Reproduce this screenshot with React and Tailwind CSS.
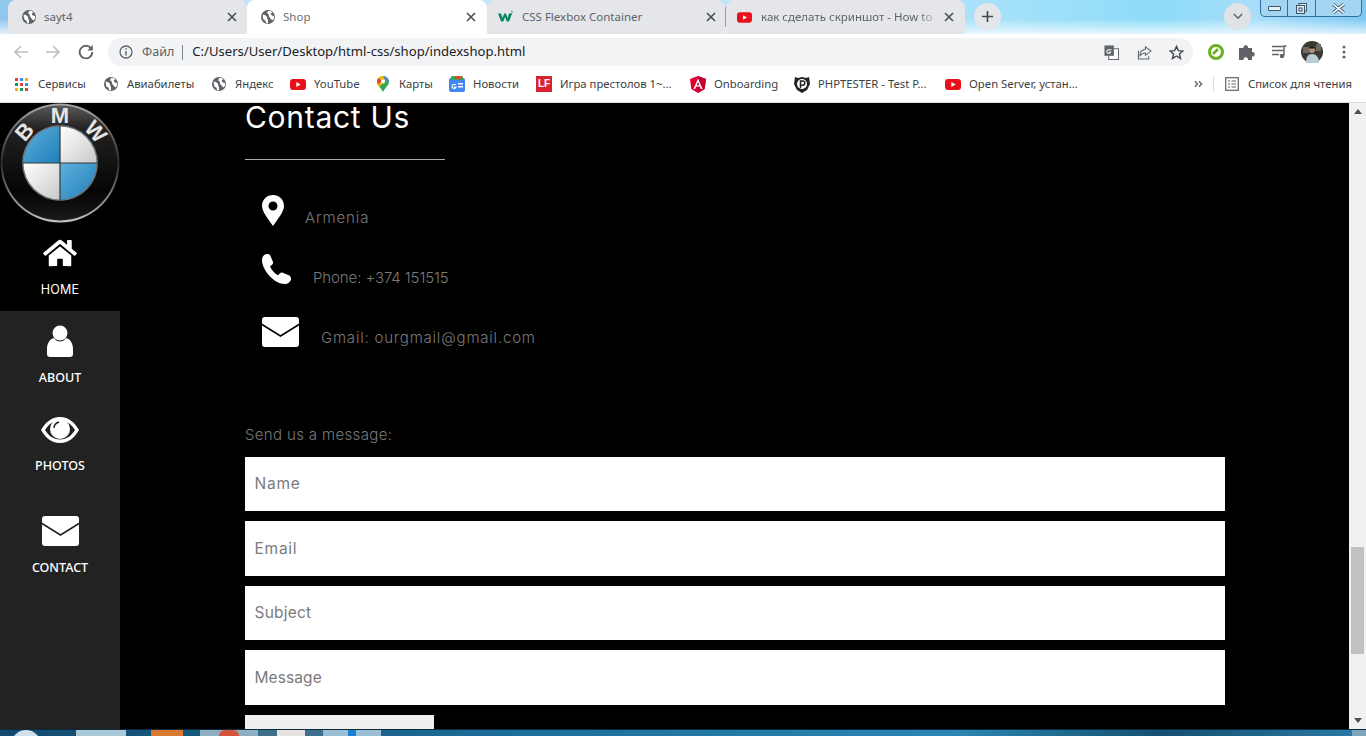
import React from "react";
import { FaHome } from "react-icons/fa";

const ui = "font-['Noto_Sans','Open_Sans',sans-serif]";
const mont = "font-['Inter','Open_Sans',sans-serif]";

const Globe = ({ className = "w-[14px] h-[14px]" }) => (
  <svg viewBox="0 0 16 16" className={className}>
    <circle cx="8" cy="8" r="8" fill="#5f6368" />
    <path d="M2 5l3 1 2 2 0 2 1 1 0 4-2 0-1-3-2-1-1-3zM8 1l3 0 2 2-2 1 1 2 3 1 0 3-2 2-2-2-2-3 0-2-2-1z" fill="#fff" />
  </svg>
);
const YT = ({ className = "w-[16px] h-[11px]" }) => (
  <svg viewBox="0 0 16 11" className={className}>
    <rect width="16" height="11" rx="3" fill="#e8101a" />
    <path d="M6.3 3l4.4 2.5-4.4 2.5z" fill="#fff" />
  </svg>
);
const W3 = () => (
  <svg viewBox="0 0 17 14" className="w-[17px] h-[14px]">
    <path d="M0 3h3.500l1.500 5 2-5h2l2 5 1.500-5H16l-3.500 9h-2.500L8 7l-2 5H3.500z" fill="#04895f" />
    <path d="M14.500 0.500h2l-1 1a.8.8 0 1 1-1 1" fill="none" stroke="#04895f" strokeWidth="0.600" />
  </svg>
);
const Close = () => (
  <svg viewBox="0 0 10 10" className="w-[10px] h-[10px]">
    <path d="M1 1l8 8M9 1l-8 8" stroke="#4a4d50" strokeWidth="1.600" />
  </svg>
);
const Grid = () => {
  const c = ["#db4437", "#4285f4", "#f4b400", "#0f9d58", "#db4437", "#4285f4", "#f4b400", "#0f9d58", "#db4437"];
  return (
    <div className="grid grid-cols-3 gap-[2px] w-[13px] h-[13px]">
      {c.map((col, i) => (
        <span key={i} style={{ background: col }} />
      ))}
    </div>
  );
};
const MapsPin = () => (
  <svg viewBox="0 0 12 16" className="w-[12px] h-[16px]">
    <path d="M6 0a6 6 0 0 1 6 6c0 3-4 6-6 10C4 12 0 9 0 6a6 6 0 0 1 6-6z" fill="#34a853" />
    <path d="M6 0a6 6 0 0 1 5 2.500L2 11C1 9.500 0 8 0 6a6 6 0 0 1 6-6z" fill="#fbbc04" />
    <path d="M1.500 2L5 5 2 8C1 7.500 0 7 0 6c0-1.500.5-3 1.500-4z" fill="#ea4335" />
    <path d="M6 0a6 6 0 0 1 6 6L8 4z" fill="#4285f4" />
    <circle cx="6" cy="5.500" r="2" fill="#fff" />
  </svg>
);
const News = () => (
  <svg viewBox="0 0 16 16" className="w-[16px] h-[16px]">
    <rect y="2" width="16" height="14" rx="2" fill="#4285f4" />
    <rect x="2" width="12" height="4" rx="1" fill="#34a853" />
    <rect x="6" width="6" height="3" fill="#ea4335" />
    <rect x="9" y="7" width="5" height="1.500" fill="#fff" />
    <rect x="9" y="10" width="5" height="1.500" fill="#fff" />
    <path d="M7 8.500H4.500a2 2 0 1 0 2.500 2.500H5" fill="none" stroke="#fff" strokeWidth="1.200" />
  </svg>
);
const LF = () => (
  <div className="w-[16px] h-[16px] bg-[#d8232f] flex items-center justify-center text-white text-[10px] font-bold leading-none font-['Liberation_Sans',sans-serif]">
    LF
  </div>
);
const Angular = () => (
  <svg viewBox="0 0 16 17" className="w-[16px] h-[17px]">
    <path d="M8 0l8 3-1.300 10L8 17l-6.700-4L0 3z" fill="#dd0031" />
    <path d="M8 0l8 3-1.300 10L8 17z" fill="#c3002f" />
    <path d="M8 2.500L3.500 13h1.700l.9-2.400h3.800l.9 2.400h1.700zM6.700 9.300L8 6l1.300 3.300z" fill="#fff" />
  </svg>
);
const PHP = () => (
  <svg viewBox="0 0 16 17" className="w-[16px] h-[17px]">
    <path d="M1 1l3 1 4-1 4 1 3-1 1 7-3 6-5 3-5-3-3-6z" fill="#222" />
    <circle cx="8" cy="8" r="5" fill="#fff" />
    <path d="M6.500 12V5h2.200a2 2 0 0 1 0 4.200H6.500" fill="none" stroke="#222" strokeWidth="1.500" />
  </svg>
);
const Tab = ({ w, active, icon, title, fade = "", closeMr, pl = "pl-[13px]", gap = "ml-[9px]" }) => (
  <div className={`${w} ${pl} h-full flex items-center shrink-0 rounded-t-[8px] ${active ? "bg-white" : "bg-[#e4e6e9]"}`}>
    <div className="w-[15px] flex justify-center shrink-0">{icon}</div>
    <span className={`${gap} flex-1 min-w-0 text-[11.500px] whitespace-nowrap overflow-hidden ${active ? "text-[#6c6f73]" : "text-[#5f6368]"} ${fade} ${ui}`}>
      {title}
    </span>
    <div className={`shrink-0 ml-1 flex ${closeMr}`}>
      <Close />
    </div>
  </div>
);

const bookmarks = [
  { w: "w-[89px]", ib: "w-[23px]", icon: <Grid />, t: "Сервисы" },
  { w: "w-[108px]", ib: "w-[23px]", icon: <Globe />, t: "Авиабилеты" },
  { w: "w-[78px]", ib: "w-[23px]", icon: <Globe />, t: "Яндекс" },
  { w: "w-[87px]", ib: "w-[24px]", icon: <YT />, t: "YouTube" },
  { w: "w-[72px]", ib: "w-[22px]", icon: <MapsPin />, t: "Карты" },
  { w: "w-[87px]", ib: "w-[24px]", icon: <News />, t: "Новости" },
  { w: "w-[154px]", ib: "w-[24px]", icon: <LF />, t: "Игра престолов 1~..." },
  { w: "w-[104px]", ib: "w-[24px]", icon: <Angular />, t: "Onboarding" },
  { w: "w-[151px]", ib: "w-[24px]", icon: <PHP />, t: "PHPTESTER - Test P..." },
  { w: "w-[150px]", ib: "w-[24px]", icon: <YT />, t: "Open Server, устан..." },
];

const Bmw = () => (
  <svg viewBox="0 0 120 120" className="w-[120px] h-[120px] block">
    <defs>
      <linearGradient id="ring" x1="0" y1="0" x2="0" y2="1">
        <stop offset="0" stopColor="#a5a5a5" />
        <stop offset="0.5" stopColor="#2a2a2a" />
        <stop offset="1" stopColor="#c4c4c4" />
      </linearGradient>
      <linearGradient id="body" x1="0" y1="0" x2="0" y2="1">
        <stop offset="0" stopColor="#5a5a5a" />
        <stop offset="0.2" stopColor="#222222" />
        <stop offset="0.75" stopColor="#050505" />
        <stop offset="1" stopColor="#1a1a1a" />
      </linearGradient>
      <linearGradient id="blue" x1="0" y1="0" x2="1" y2="1">
        <stop offset="0" stopColor="#5fb0dd" />
        <stop offset="1" stopColor="#1f7fb8" />
      </linearGradient>
      <linearGradient id="wh" x1="0" y1="0" x2="1" y2="1">
        <stop offset="0" stopColor="#ffffff" />
        <stop offset="1" stopColor="#c9c9c9" />
      </linearGradient>
      <path id="arc" d="M 20 60 A 40 40 0 0 1 100 60" />
    </defs>
    <circle cx="60" cy="60" r="59.500" fill="url(#ring)" />
    <circle cx="60" cy="60" r="57.500" fill="url(#body)" />
    <g fill="#e4e4e4" fontFamily="Liberation Sans, sans-serif" fontSize="22" fontWeight="700">
      <text><textPath href="#arc" startOffset="23%" textAnchor="middle">B</textPath></text>
      <text><textPath href="#arc" startOffset="50%" textAnchor="middle">M</textPath></text>
      <text><textPath href="#arc" startOffset="77%" textAnchor="middle">W</textPath></text>
    </g>
    <circle cx="60" cy="60" r="38" fill="#6d7378" />
    <path d="M60 60V23.500A36.500 36.500 0 0 0 23.500 60z" fill="url(#blue)" />
    <path d="M60 60V23.500A36.500 36.500 0 0 1 96.500 60z" fill="url(#wh)" />
    <path d="M60 60H23.500A36.500 36.500 0 0 0 60 96.500z" fill="url(#wh)" />
    <path d="M60 60H96.500A36.500 36.500 0 0 1 60 96.500z" fill="url(#blue)" />
    <path d="M60 22V98M22 60H98" stroke="#33393d" strokeWidth="1.200" />
  </svg>
);

const UserIcon = () => (
  <svg viewBox="0 0 26 32" className="w-[26px] h-[32px]">
    <circle cx="13" cy="8" r="7.500" fill="#fff" />
    <path d="M7 13c1.500 2.500 3.500 3.500 6 3.500s4.500-1 6-3.500c4 1 7 5 7 11v5a3 3 0 0 1-3 3H3a3 3 0 0 1-3-3v-5c0-6 3-10 7-11z" fill="#fff" />
  </svg>
);
const EyeIcon = () => (
  <svg viewBox="0 0 38 26" className="w-[38px] h-[26px]">
    <path fillRule="evenodd" d="M19 0C28 0 34 6 38 13c-4 7-10 13-19 13S4 20 0 13C4 6 10 0 19 0zM19 3.500C12 3.500 7 8 4 13c3 5 8 9.500 15 9.500S31 18 34 13C31 8 26 3.500 19 3.500z" fill="#fff" />
    <circle cx="19" cy="12" r="10" fill="#fff" />
    <path d="M13 11c0-3 2-5 5-6" fill="none" stroke="#222" strokeWidth="1.500" />
  </svg>
);
const MailIcon = () => (
  <svg viewBox="0 0 37 30" className="w-[37px] h-[30px]">
    <path d="M3 0h31a3 3 0 0 1 3 3v3.500L18.500 18 0 6.500V3a3 3 0 0 1 3-3z" fill="#fff" />
    <path d="M0 8.500l18.500 11.500L37 8.500V27a3 3 0 0 1-3 3H3a3 3 0 0 1-3-3z" fill="#fff" />
  </svg>
);
const PinIcon = () => (
  <svg viewBox="0 0 22 31" className="w-[22px] h-[31px]">
    <path fillRule="evenodd" d="M11 0c6 0 11 4.500 11 11 0 6-7 14-11 20C7 25 0 17 0 11 0 4.500 5 0 11 0zM11 6.500a4.500 4.500 0 1 0 0 9 4.500 4.500 0 0 0 0-9z" fill="#fff" />
  </svg>
);
const PhoneIcon = () => (
  <svg viewBox="0 0 29 30" className="w-[29px] h-[30px]">
    <path d="M5 0c2 0 3 .5 3.500 2L11 8c.3 1-.2 2-1 2.800L8 12.500c1.500 3.500 4.500 7 8 8.800l2-2c.8-.8 1.800-1 2.800-.6l6 2.600c1.500.6 2.200 2 2.200 3.400 0 2.500-2.500 5.300-6 5.300C12 30 0 16 0 6 0 3 2 0 5 0z" fill="#fff" />
  </svg>
);
const Avatar = () => (
  <svg viewBox="0 0 22 22" className="w-[22px] h-[22px] ml-[13px]">
    <circle cx="11" cy="11" r="11" fill="#3d3a34" />
    <path d="M2 6h6v6H2zM15 3h5v7h-5z" fill="#6f6a5f" />
    <path d="M5 22c0-6 2-9 6-9s7 3 7 9z" fill="#b9cdd6" />
    <circle cx="11" cy="9" r="3" fill="#b58f77" />
    <path d="M8 7.500c1-2.500 5-2.500 6 0z" fill="#1d1b18" />
  </svg>
);

const NavItem = ({ box, icon, label, h }) => (
  <div className={`${h} flex flex-col items-center`}>
    <div className={`${box} flex items-start justify-center`}>{icon}</div>
    <span className="text-[12.500px] leading-[16px] font-medium text-white">{label}</span>
  </div>
);

const Field = ({ ph, h, tr }) => (
  <input
    placeholder={ph}
    readOnly
    className={`${h} ${tr} w-full bg-white pl-[9.500px] pb-[1px] text-[15.500px] text-[#7b7b7b] placeholder:text-[#7b7b7b] outline-none block ${mont}`}
  />
);

export default function App() {
  return (
    <div className="w-[1366px] h-[736px] flex flex-col overflow-hidden bg-black">
      {/* tab strip */}
      <div className="h-[34px] flex shrink-0 bg-[linear-gradient(180deg,transparent_55%,rgba(255,255,255,0.75)_100%),linear-gradient(90deg,#8fc6ee_0%,#c4e4f8_18%,#bfe6fb_60%,#8ddcf8_85%,#a9defa_92%,#7cc8f2_100%)]">
        <div className="w-[8px] shrink-0" />
        <Tab w="w-[239px]" gap="ml-[8px]" icon={<Globe />} title="sayt4" closeMr="mr-[10px]" />
        <Tab w="w-[240px]" gap="ml-[8px]" active icon={<Globe />} title="Shop" closeMr="mr-[11px]" />
        <Tab w="w-[238px]" pl="pl-[11px]" icon={<W3 />} title="CSS Flexbox Container" closeMr="mr-[9px]" />
        <div className="w-[1px] bg-[#9aa0a6] shrink-0 my-[7px]" />
        <Tab
          w="w-[239px]"
          pl="pl-[11px]"
          icon={<YT />}
          title="как сделать скриншот - How to"
          closeMr="mr-[11px]"
          fade="[mask-image:linear-gradient(90deg,#000_88%,transparent_100%)]"
        />
        <div className="ml-[9px] mt-[3px] w-[27px] h-[27px] rounded-full bg-[#e4e6e9] flex items-center justify-center shrink-0">
          <svg viewBox="0 0 14 14" className="w-[13px] h-[13px]">
            <path d="M7 1v12M1 7h12" stroke="#45484c" strokeWidth="1.800" />
          </svg>
        </div>
        <div className="ml-[223px] mt-[3px] w-[27px] h-[27px] rounded-full bg-[#dfe3e6] flex items-center justify-center shrink-0">
          <svg viewBox="0 0 12 8" className="w-[10px] h-[7px]">
            <path d="M1 1l5 5 5-5" fill="none" stroke="#5f6368" strokeWidth="1.800" />
          </svg>
        </div>
        <div className="ml-[9px] w-[102px] h-[17px] border border-t-0 border-[#2f6f9d] rounded-b-[5px] bg-[#a4d5f2] flex items-center shrink-0">
          <div className="w-[27px] h-full flex items-center justify-center border-r border-[#2f6f9d]">
            <div className="w-[13px] h-[5px] border border-[#39566b] bg-[#e8f0f6] rounded-[1px]" />
          </div>
          <div className="w-[28px] h-full flex items-center justify-center border-r border-[#2f6f9d]">
            <svg viewBox="0 0 11 11" className="w-[11px] h-[11px]">
              <rect x="3" y="0.500" width="7.500" height="7.500" fill="#dfe9f0" stroke="#39566b" />
              <rect x="0.500" y="2.500" width="8" height="8" fill="#dfe9f0" stroke="#39566b" />
              <rect x="3" y="5" width="3" height="3" fill="none" stroke="#39566b" />
            </svg>
          </div>
          <div className="flex-1 flex items-center justify-center">
            <svg viewBox="0 0 14 10" className="w-[15px] h-[11px]">
              <path d="M2 1l10 8M12 1L2 9" stroke="#39566b" strokeWidth="3" />
              <path d="M2 1l10 8M12 1L2 9" stroke="#fff" strokeWidth="1.500" />
            </svg>
          </div>
        </div>
      </div>

      {/* toolbar */}
      <div className="h-[34px] pt-[2px] bg-white flex items-center shrink-0">
        <div className="w-[108px] flex items-center pl-[13px] shrink-0">
          <svg viewBox="0 0 16 16" className="w-[16px] h-[16px]">
            <path d="M15 8H2M8 2L2 8l6 6" fill="none" stroke="#bcbfc3" strokeWidth="1.700" />
          </svg>
          <svg viewBox="0 0 16 16" className="w-[16px] h-[16px] ml-[16px]">
            <path d="M1 8h13M8 2l6 6-6 6" fill="none" stroke="#bcbfc3" strokeWidth="1.700" />
          </svg>
          <svg viewBox="0 0 16 16" className="w-[16px] h-[16px] ml-[17px]">
            <path d="M13.500 5A6.300 6.300 0 1 0 14.300 8" fill="none" stroke="#5f6368" strokeWidth="1.800" />
            <path d="M14.800 1v5.500H9.300z" fill="#5f6368" />
          </svg>
        </div>
        <div className="w-[1085px] h-[28px] rounded-full bg-[#f1f3f4] flex items-center pl-[11px] shrink-0">
          <svg viewBox="0 0 14 14" className="w-[14px] h-[14px] shrink-0">
            <circle cx="7" cy="7" r="6" fill="none" stroke="#5f6368" strokeWidth="1.300" />
            <path d="M7 6v4.500M7 3.300v1.400" stroke="#5f6368" strokeWidth="1.400" />
          </svg>
          <span className={`ml-[9px] text-[12.500px] text-[#5f6368] ${ui}`}>Файл</span>
          <div className="w-[1px] h-[15px] bg-[#80868b] ml-[8px]" />
          <span className={`ml-[9px] text-[13.100px] text-[#202124] whitespace-nowrap ${ui}`}>
            C:/Users/User/Desktop/html-css/shop/indexshop.html
          </span>
          <div className="ml-auto flex items-center pr-[9px]">
            <svg viewBox="0 0 16 16" className="w-[15px] h-[15px]">
              <rect x="5" y="4" width="10.500" height="11.500" fill="#fff" stroke="#5f6368" />
              <rect x="0.500" y="0.500" width="10" height="11" fill="#5f6368" />
              <path d="M8 5H4.500a2 2 0 1 0 2.500 2.500H5.500" fill="none" stroke="#fff" strokeWidth="1.200" />
            </svg>
            <svg viewBox="0 0 16 16" className="w-[15px] h-[15px] ml-[18px]">
              <path d="M9 2l6 4.500L9 11V8.500C6 8.500 4 10 3 12c0-4 2-7 6-7.500z M1.500 6v9h11v-3" fill="none" stroke="#5f6368" strokeWidth="1.100" />
            </svg>
            <svg viewBox="0 0 16 16" className="w-[15px] h-[15px] ml-[17px]">
              <path d="M8 1.500l2 4.500 4.800.4-3.700 3.100 1.200 4.800L8 11.700l-4.300 2.600 1.200-4.800L1.200 6.400 6 6z" fill="none" stroke="#45484c" strokeWidth="1.500" />
            </svg>
          </div>
        </div>
        <div className="flex items-center pl-[15px]">
          <svg viewBox="0 0 16 16" className="w-[16px] h-[16px]">
            <circle cx="8" cy="8" r="6.500" fill="none" stroke="#6ab023" strokeWidth="3" />
            <path d="M5 10l5-5" stroke="#6ab023" strokeWidth="2.500" />
          </svg>
          <svg viewBox="0 0 16 16" className="w-[16px] h-[16px] ml-[15px]">
            <path d="M0 4h4.500a2.300 2.300 0 1 1 4.500 0H13v4a2.300 2.300 0 1 1 0 4.500V16H9a2.300 2.300 0 1 0-4.500 0H0z" fill="#5f6368" />
          </svg>
          <svg viewBox="0 0 16 14" className="w-[16px] h-[14px] ml-[17px]">
            <path d="M0 1.500h11M0 5.500h11M0 9.500h7" stroke="#5f6368" strokeWidth="1.300" />
            <path d="M14.500 1H12v9.500" fill="none" stroke="#5f6368" strokeWidth="1.500" />
            <circle cx="10" cy="11" r="2.300" fill="#5f6368" />
          </svg>
          <Avatar />
          <svg viewBox="0 0 4 14" className="w-[4px] h-[14px] ml-[19px]">
            <circle cx="2" cy="2" r="1.500" fill="#5f6368" />
            <circle cx="2" cy="7" r="1.500" fill="#5f6368" />
            <circle cx="2" cy="12" r="1.500" fill="#5f6368" />
          </svg>
        </div>
      </div>

      {/* bookmarks */}
      <div className="h-[35px] pb-[2px] bg-white border-b border-[#dadce0] flex items-center pl-[15px] shrink-0">
        {bookmarks.map((b) => (
          <div key={b.t} className={`${b.w} flex items-center shrink-0`}>
            <div className={`${b.ib} shrink-0 flex`}>{b.icon}</div>
            <span className={`text-[11.300px] text-[#3c4043] whitespace-nowrap ${ui}`}>{b.t}</span>
          </div>
        ))}
        <svg viewBox="0 0 10 8" className="w-[9px] h-[8px] ml-[99px] shrink-0">
          <path d="M1 1l3 3-3 3M5.500 1l3 3-3 3" fill="none" stroke="#5f6368" strokeWidth="1.500" />
        </svg>
        <div className="w-[1px] h-[16px] bg-[#dadce0] ml-[10px] shrink-0" />
        <svg viewBox="0 0 14 14" className="w-[14px] h-[14px] ml-[11px] shrink-0">
          <rect x="0.700" y="0.700" width="12.600" height="12.600" fill="none" stroke="#5f6368" strokeWidth="1.200" />
          <path d="M3 4h2M3 7h2M3 10h2M6.500 4H11M6.500 7H11M6.500 10H11" stroke="#5f6368" strokeWidth="1.200" />
        </svg>
        <span className={`ml-[9px] text-[11.300px] text-[#3c4043] whitespace-nowrap ${ui}`}>Список для чтения</span>
      </div>

      {/* page */}
      <div className="flex-1 min-h-0 flex bg-black">
        <aside className="w-[120px] shrink-0 flex flex-col">
          <Bmw />
          <div className="h-[88px] bg-black flex flex-col items-center">
            <div className="h-[51px] pt-[15px] flex justify-center">
              <FaHome className="text-white w-[34px] h-[30px]" />
            </div>
            <span className={`mt-[8px] text-[12.500px] leading-[16px] tracking-[0.15px] text-white ${mont}`}>HOME</span>
          </div>
          <div className={`flex-1 bg-[#222222] flex flex-col ${ui}`}>
            <NavItem h="h-[88px]" box="h-[59px] pt-[14px]" icon={<UserIcon />} label="ABOUT" />
            <NavItem h="h-[102px]" box="h-[59px] pt-[18px]" icon={<EyeIcon />} label="PHOTOS" />
            <NavItem h="h-[90px]" box="h-[59px] pt-[15px]" icon={<MailIcon />} label="CONTACT" />
          </div>
        </aside>

        <main className={`flex-1 min-w-0 pl-[125px] ${mont}`}>
          <div className="w-[980px]">
            <h1 className="text-[30px] leading-[28px] h-[28px] text-white font-normal tracking-[0.7px]">Contact Us</h1>
            <div className="mt-[28px] w-[200px] h-[1px] bg-[#a9a9a9]" />
            <div className="mt-[28px] flex flex-col">
              <div className="h-[60px] flex pl-[17px] gap-[21px]">
                <div className="mt-[7px]"><PinIcon /></div>
                <span className="mt-[20px] text-[15px] leading-[20px] font-light text-[#7a7a7a] tracking-[0.9px]">Armenia</span>
              </div>
              <div className="h-[60px] flex pl-[17px] gap-[22px]">
                <div className="mt-[6px]"><PhoneIcon /></div>
                <span className="mt-[20px] text-[15px] leading-[20px] font-light text-[#7a7a7a] tracking-[-0.1px]">Phone: +374 151515</span>
              </div>
              <div className="h-[60px] flex pl-[17px] gap-[22px]">
                <div className="mt-[9px]"><MailIcon /></div>
                <span className="mt-[20px] text-[15px] leading-[20px] font-light text-[#7a7a7a] tracking-[0.8px]">Gmail: ourgmail@gmail.com</span>
              </div>
            </div>
            <p className="mt-[57px] text-[15px] leading-[20px] font-light text-[#7a7a7a] tracking-[0.35px]">Send us a message:</p>
            <div className="mt-[12px] flex flex-col gap-[10px]">
              <Field ph="Name" h="h-[54px]" tr="tracking-[0.8px]" />
              <Field ph="Email" h="h-[55px]" tr="tracking-[0.75px]" />
              <Field ph="Subject" h="h-[54px]" tr="tracking-[0.2px]" />
              <Field ph="Message" h="h-[55px]" tr="tracking-[0.1px]" />
              <div className="w-[189px] h-[40px] bg-[#efefef]" />
            </div>
          </div>
        </main>

        <div className="w-[17px] shrink-0 bg-[#f1f1f1] flex flex-col items-center">
          <svg viewBox="0 0 8 5" className="w-[8px] h-[5px] mt-[6px]">
            <path d="M0 5l4-5 4 5z" fill="#505050" />
          </svg>
          <div className="w-[13px] h-[107px] bg-[#c1c1c1] mt-[433px]" />
          <svg viewBox="0 0 8 5" className="w-[8px] h-[5px] mt-auto mb-[6px]">
            <path d="M0 0l4 5 4-5z" fill="#505050" />
          </svg>
        </div>
      </div>

      {/* taskbar */}
      <div className="h-[7px] shrink-0 flex items-stretch bg-[linear-gradient(90deg,#134a6d_0%,#1d6f9c_40%,#2b86b4_70%,#14506f_85%,#2b7ba8_100%)] border-t border-[#0b2a3d]">
        <div className="w-[76px] shrink-0 relative overflow-hidden">
          <div className="absolute left-[11px] top-0 w-[30px] h-[30px] rounded-full bg-[#cfe0ea]" />
        </div>
        <div className="w-[50px] shrink-0 bg-[#a9c8d5]" />
        <div className="w-[74px] shrink-0 flex justify-center pl-[8px]">
          <div className="w-[32px] bg-[#d9792f]" />
        </div>
        <div className="w-[58px] shrink-0 bg-[#8fb0c2] flex justify-center">
          <div className="w-[20px] rounded-t-full bg-[#d5533a]" />
        </div>
        <div className="w-[65px] shrink-0 bg-[#3f6f8f] flex justify-center">
          <div className="w-[28px] bg-[#e8e2e0]" />
        </div>
        <div className="w-[58px] shrink-0 bg-[#9cc0d3] flex justify-center">
          <div className="w-[8px] bg-[#1b7fd0]" />
        </div>
        <div className="ml-auto w-[14px] bg-[#7fa6ba]" />
      </div>
    </div>
  );
}
